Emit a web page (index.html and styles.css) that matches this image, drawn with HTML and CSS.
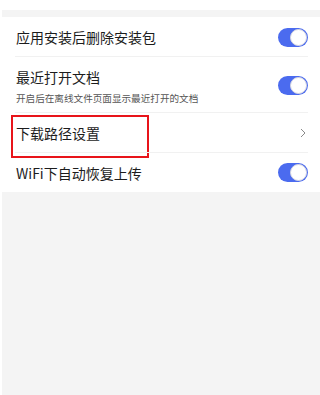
FILE: index.html
```html
<!DOCTYPE html>
<html lang="zh">
<head>
<meta charset="utf-8">
<link rel="stylesheet" href="styles.css">
</head>
<body>
<div class="page">
  <div class="header"><div class="title">传输设置</div></div>
  <div class="gap"></div>
  <div class="list">
    <div class="row r1">
      <div class="label">应用安装后删除安装包</div>
      <div class="toggle"><span class="knob"></span></div>
    </div>
    <div class="row r2">
      <div class="texts">
        <div class="label">最近打开文档</div>
        <div class="sub">开启后在离线文件页面显示最近打开的文档</div>
      </div>
      <div class="toggle"><span class="knob"></span></div>
    </div>
    <div class="row r3">
      <div class="label">下载路径设置</div>
      <svg class="chev" width="6" height="10" viewBox="0 0 6 10"><path d="M1 1 L5 5 L1 9" fill="none" stroke="#8a8a8a" stroke-width="1"/></svg>
      <div class="highlight"></div>
    </div>
    <div class="row r4">
      <div class="label">WiFi下自动恢复上传</div>
      <div class="toggle"><span class="knob"></span></div>
    </div>
  </div>
  <div class="rest"></div>
</div>
</body>
</html>
```
FILE: styles.css
```css
html, body {
  margin: 0;
  padding: 0;
  background: #ffffff;
}
body {
  font-family: "Noto Sans CJK SC", "Noto Sans", sans-serif;
  color: #1c1c1c;
}
.page {
  width: 320px;
  height: 395px;
  display: flex;
  flex-direction: column;
  overflow: hidden;
}
.header {
  height: 10px;
  overflow: hidden;
  display: flex;
  justify-content: center;
}
.title {
  font-size: 14px;
  line-height: 20px;
  margin-top: -19px;
  color: #333;
}
.gap {
  height: 7px;
  margin-left: 2px;
  background: #f4f4f4;
}
.list {
  display: flex;
  flex-direction: column;
}
.row {
  position: relative;
  display: flex;
  align-items: center;
  justify-content: space-between;
  padding: 0 12px 0 16px;
}
.row::after {
  content: "";
  position: absolute;
  left: 15px;
  right: 12px;
  bottom: 0;
  height: 1px;
  background: #f1f1f1;
}
.r4::after { display: none; }
.r1 { height: 40px; }
.r2 { height: 56px; }
.r3 { height: 40px; }
.r4 { height: 39px; }
.label {
  font-size: 14px;
  line-height: 20px;
  color: #1c1c1c;
}
.texts {
  display: flex;
  flex-direction: column;
  padding-top: 2px;
}
.sub {
  font-size: 9.6px;
  line-height: 14px;
  color: #555;
  margin-top: 4px;
}
.toggle {
  width: 30px;
  height: 19px;
  border-radius: 10px;
  background: #4b6bef;
  position: relative;
  flex: none;
}
.knob {
  position: absolute;
  right: 1px;
  top: 1px;
  width: 15px;
  height: 15px;
  border-radius: 50%;
  background: #fff;
  border: 1px solid #d8d8e0;
}
.chev {
  margin-right: 2px;
}
.highlight {
  position: absolute;
  left: 11px;
  top: 2px;
  width: 134px;
  height: 39px;
  border: 2px solid #e8141a;
}
.rest {
  flex: 1;
  margin-left: 2px;
  background: #f4f4f4;
}
```
